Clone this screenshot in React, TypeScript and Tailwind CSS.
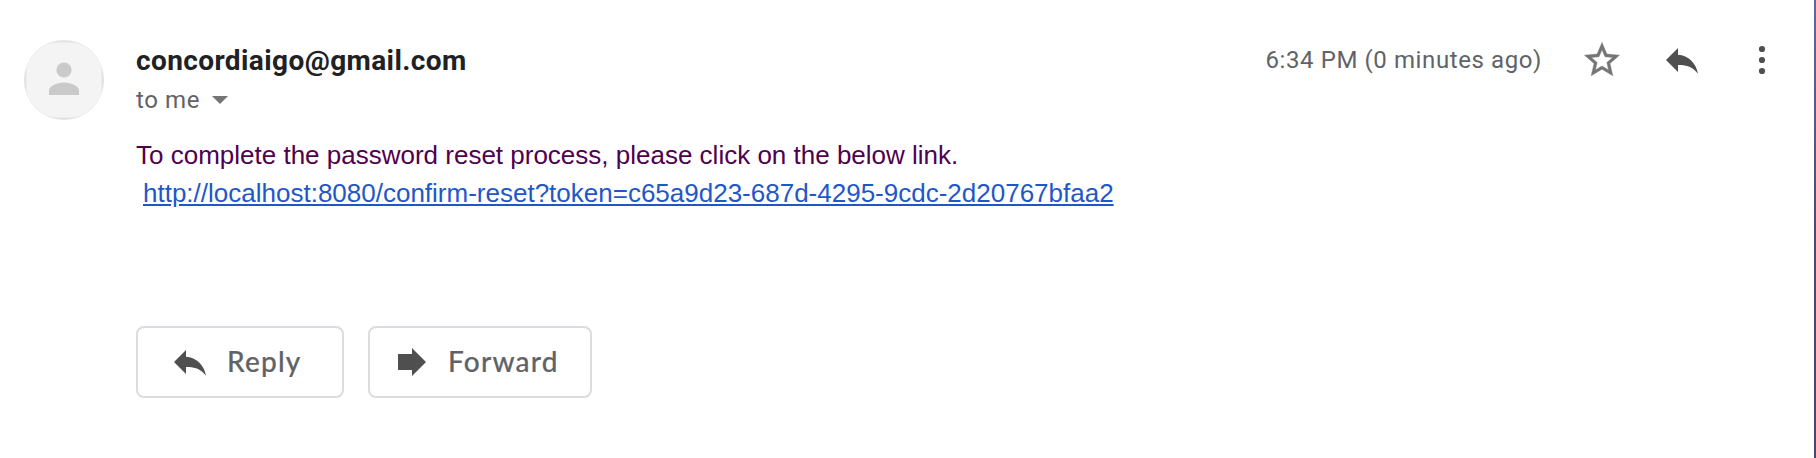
function ReplyIcon() {
  return (
    <svg width="40" height="40" viewBox="0 0 40 40" fill="#4f4f4f" aria-hidden="true">
      <path d="M4 20 L16 8 V14.8 C26.500 15.500 34 23 36 33.800 C30.500 26.500 24 24.800 16 25 V32 Z" />
    </svg>
  );
}

function ForwardIcon() {
  return (
    <svg width="40" height="40" viewBox="0 0 40 40" fill="#4f4f4f" aria-hidden="true">
      <path d="M6 12 H20 V6 L34 20 L20 34 V28 H6 Z" />
    </svg>
  );
}

function StarIcon() {
  return (
    <svg width="42" height="42" viewBox="0 0 24 24" fill="#757575" aria-hidden="true">
      <path
        stroke="#757575"
        strokeWidth="0.25"
        d="M22 9.240l-7.190-.62L12 2 9.190 8.630 2 9.240l5.460 4.730L5.820 21 12 17.270 18.180 21l-1.630-7.030L22 9.240zM12 15.400l-3.760 2.270 1-4.280-3.320-2.880 4.380-.38L12 6.100l1.710 4.040 4.380.38-3.320 2.880 1 4.280L12 15.400z"
      />
    </svg>
  );
}

function MoreIcon() {
  return (
    <svg width="40" height="40" viewBox="0 0 40 40" fill="#4f4f4f" aria-hidden="true">
      <circle cx="20" cy="9" r="3.100" />
      <circle cx="20" cy="20" r="3.100" />
      <circle cx="20" cy="31" r="3.100" />
    </svg>
  );
}

function Avatar() {
  return (
    <svg width="80" height="80" viewBox="0 0 80 80" className="shrink-0" aria-hidden="true">
      <circle cx="40" cy="40" r="40" fill="#e2e2e2" />
      <clipPath id="face">
        <circle cx="40" cy="40" r="39.600" />
      </clipPath>
      <rect x="2.500" y="2.500" width="75" height="75" fill="#f4f4f4" clipPath="url(#face)" />
      <circle cx="40" cy="30" r="7.600" fill="#cacaca" />
      <path d="M25 55 V50.500 C25 45.500 34 42.500 40 42.500 S55 45.500 55 50.500 V55 Z" fill="#cacaca" />
    </svg>
  );
}

export default function App() {
  return (
    <div className="flex h-[458px] w-[1816px] bg-white">
      <main className="flex flex-1 gap-8 pt-10 pl-6">
        <Avatar />
        <div className="flex-1">
          <header className="flex h-[92px] justify-between pr-[32px] font-['Roboto',sans-serif]">
            <div>
              <h1 className="h-10 text-[28px] leading-[42px] font-bold tracking-[0.4px] text-[#202124]">concordiaigo@gmail.com</h1>
              <div className="flex h-10 items-center gap-3 text-[24px] tracking-[0.6px] text-[#5f6368]">
                <span>to me</span>
                <svg width="16" height="8" viewBox="0 0 16 8" fill="#757575" aria-hidden="true">
                  <path d="M0 0h16L8 8z" />
                </svg>
              </div>
            </div>
            <div className="flex h-10 items-center">
              <time className="mr-[39px] text-[24px] tracking-[0.6px] text-[#5f6368]">6:34 PM (0 minutes ago)</time>
              <StarIcon />
              <span className="ml-[39px]"><ReplyIcon /></span>
              <span className="ml-10"><MoreIcon /></span>
            </div>
          </header>
          <div className="pt-1 font-['Liberation_Sans',Arial,sans-serif] text-[26px] leading-[38px] text-[#500050]">
            <p>To complete the password reset process, please click on the below link.</p>
            <p className="pl-[7px]">
              <a href="#" className="text-[#1f57c9] underline">http://localhost:8080/confirm-reset?token=c65a9d23-687d-4295-9cdc-2d20767bfaa2</a>
            </p>
          </div>
          <div className="mt-[114px] flex gap-6 font-['Lato',sans-serif] text-[28px] font-medium tracking-[1.2px] text-[#5f6368] [-webkit-text-stroke:0.2px_#5f6368]">
            <button className="flex h-[72px] w-[208px] items-center gap-[17px] rounded-lg border-2 border-[#dadce0] pl-8">
              <ReplyIcon />
              <span className="-mt-0.5">Reply</span>
            </button>
            <button className="flex h-[72px] w-[224px] items-center gap-4 rounded-lg border-2 border-[#dadce0] pl-[22px]">
              <ForwardIcon />
              <span className="-mt-0.5">Forward</span>
            </button>
          </div>
        </div>
      </main>
      <div className="w-0.5 bg-linear-to-b from-[#5c68a8] via-[#4b4a75] to-[#4a4470]" />
    </div>
  );
}
